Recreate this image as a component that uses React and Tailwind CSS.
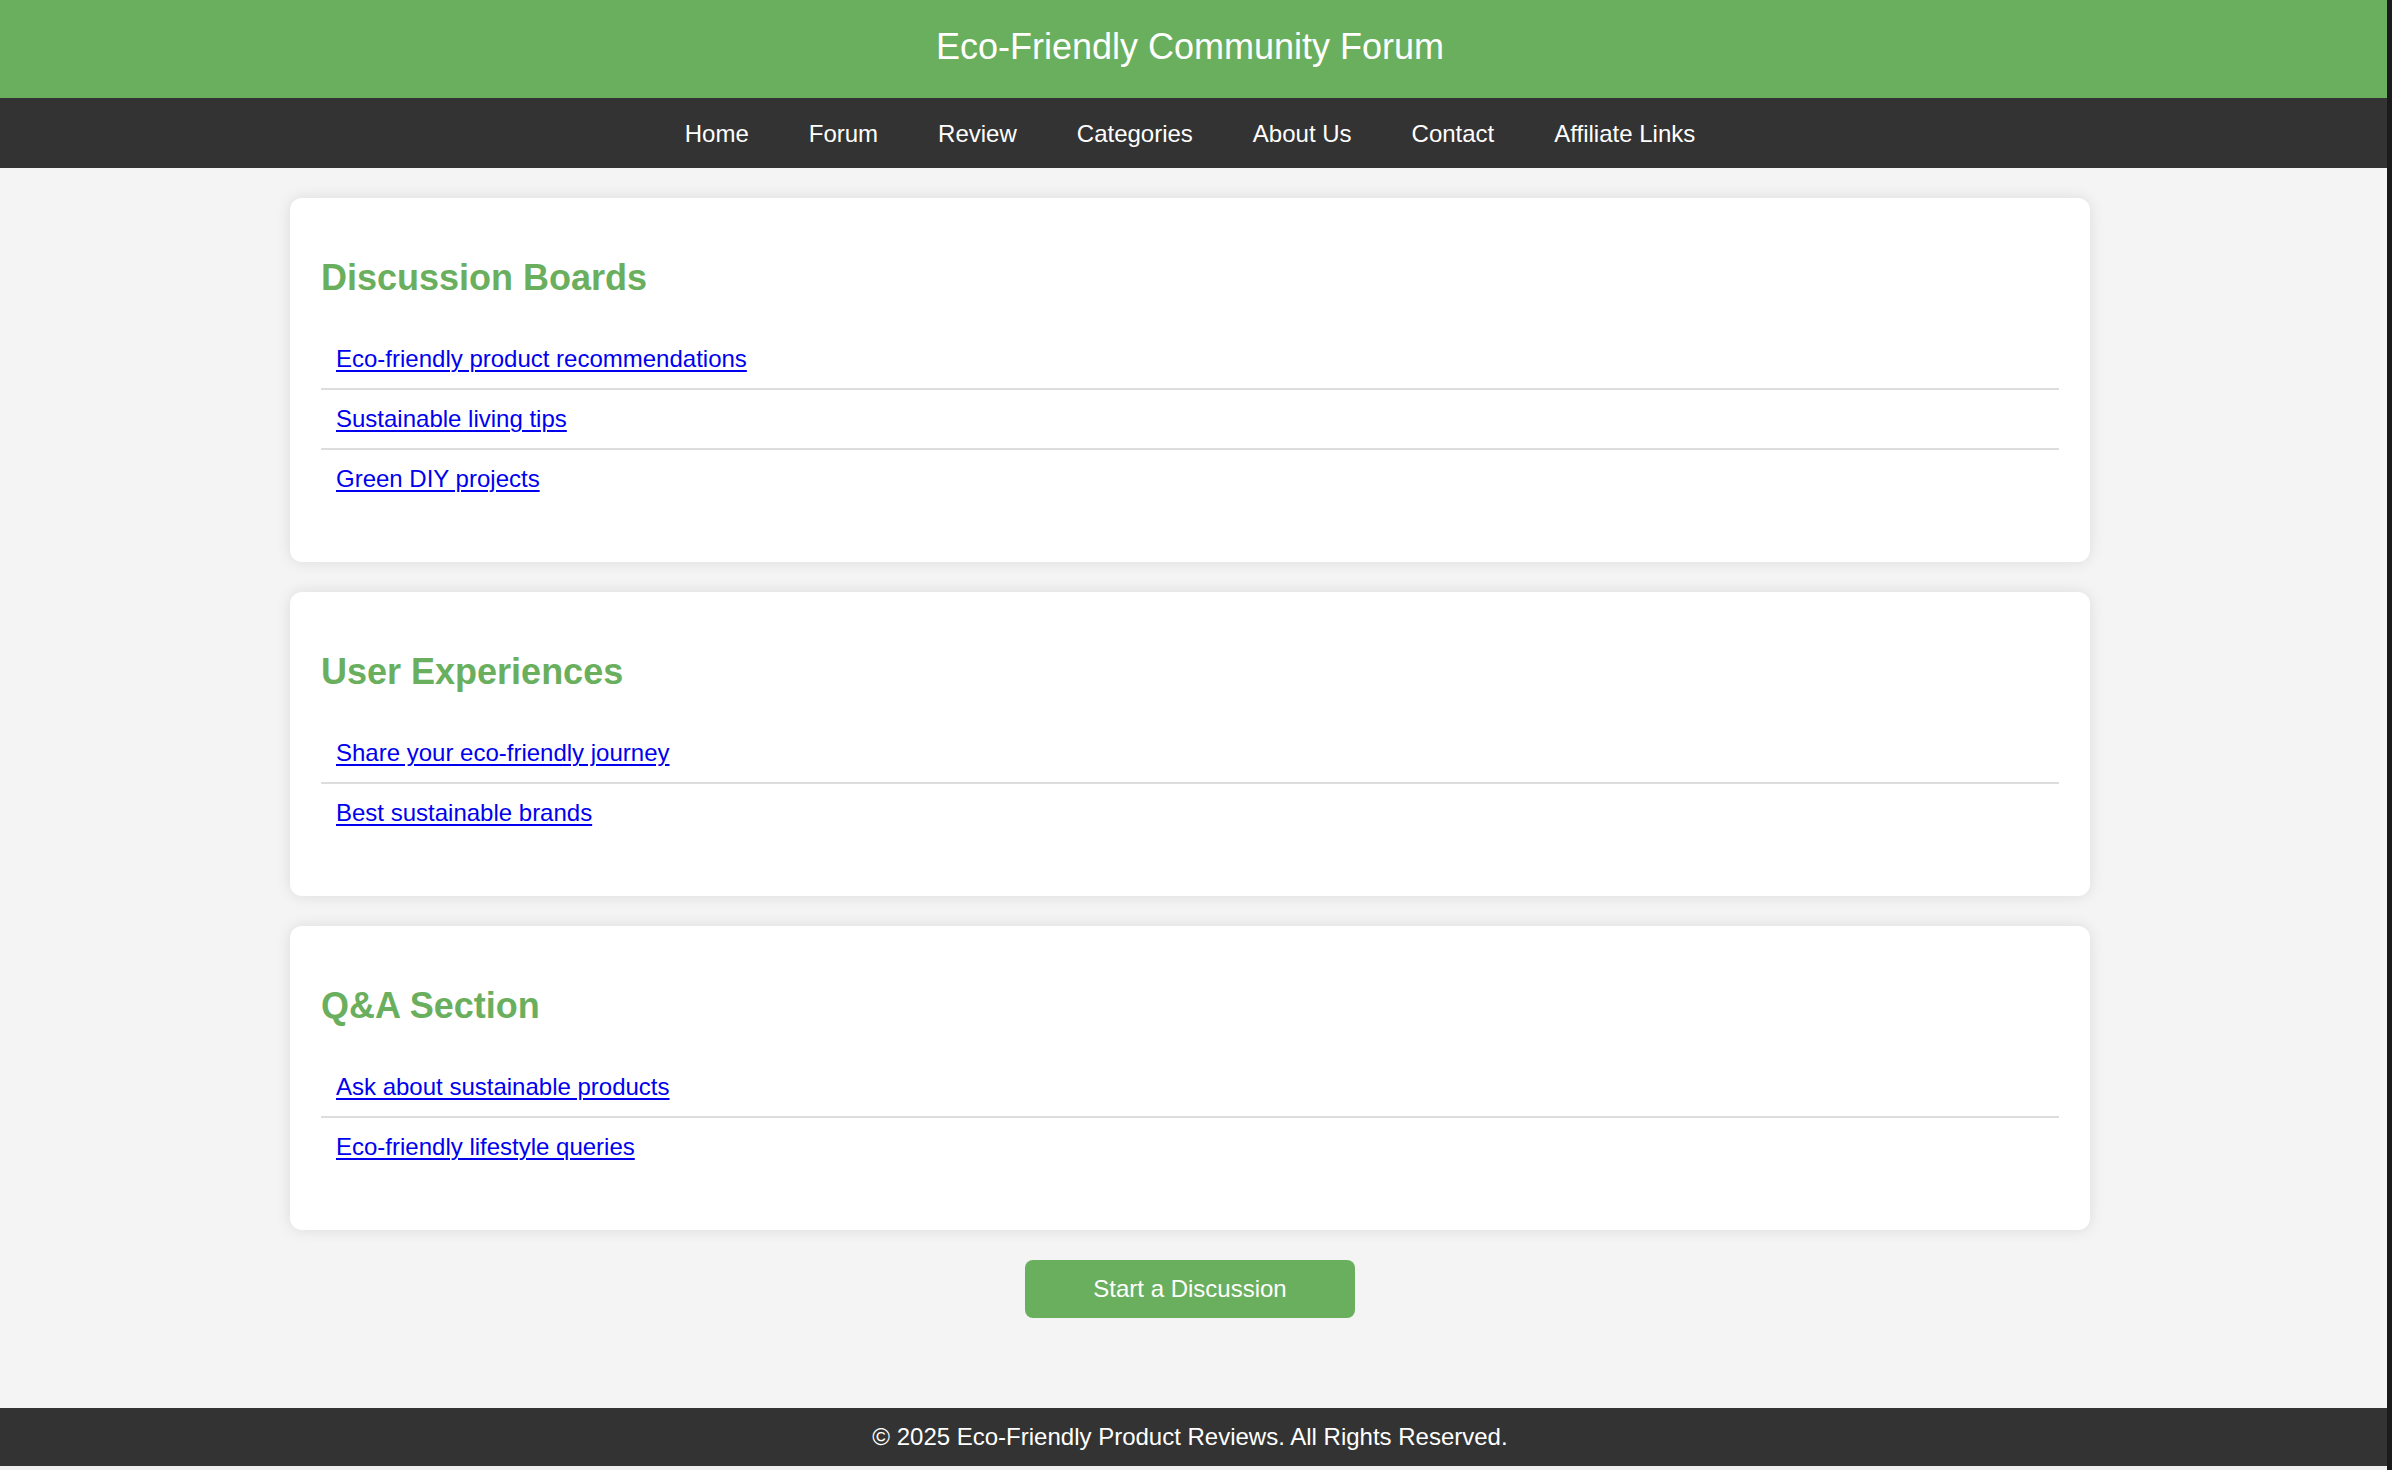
import React from "react";

const font = { fontFamily: '"Liberation Sans", Arial, sans-serif' };

const sections = [
  {
    title: "Discussion Boards",
    links: [
      "Eco-friendly product recommendations",
      "Sustainable living tips",
      "Green DIY projects",
    ],
  },
  {
    title: "User Experiences",
    links: ["Share your eco-friendly journey", "Best sustainable brands"],
  },
  {
    title: "Q&A Section",
    links: ["Ask about sustainable products", "Eco-friendly lifestyle queries"],
  },
];

const nav = ["Home", "Forum", "Review", "Categories", "About Us", "Contact", "Affiliate Links"];

function Card({ title, links }) {
  return (
    <section className="w-[1800px] bg-white rounded-[12px] shadow-[0_0_15px_rgba(0,0,0,0.1)] px-[31px] pt-[59px] pb-[54px]">
      <h2 className="text-[36px] leading-[41px] font-bold text-[#6aaf5e] mb-[32px]">{title}</h2>
      <ul>
        {links.map((l, i) => (
          <li
            key={l}
            className={
              "px-[15px] py-[15px] leading-[28px] text-[24px] " +
              (i < links.length - 1 ? "border-b-2 border-[#dddddd]" : "")
            }
          >
            <a href="#" className="text-[#0000ee] underline underline-offset-[3px] decoration-[2px]">
              {l}
            </a>
          </li>
        ))}
      </ul>
    </section>
  );
}

export default function App() {
  return (
    <div className="flex w-[2392px] min-h-[1470px] bg-[#1b1b1b]" style={font}>
      <div className="w-[2387px] bg-[#f4f4f4] flex flex-col">
        <header className="bg-[#6aaf5e] h-[98px]">
          <div className="w-[2380px] h-full flex justify-center pt-[26px]">
            <h1 className="text-white text-[36px] leading-[41px] font-normal">Eco-Friendly Community Forum</h1>
          </div>
        </header>
        <nav className="bg-[#333333] h-[70px]">
          <div className="w-[2380px] h-full flex justify-center items-center gap-[60px] pt-[1px]">
            {nav.map((n) => (
              <a key={n} href="#" className="text-white text-[24px] leading-[28px]">
                {n}
              </a>
            ))}
          </div>
        </nav>
        <main className="w-[2380px] flex flex-col items-center pt-[30px] gap-[30px]">
          {sections.map((s) => (
            <Card key={s.title} {...s} />
          ))}
          <button className="w-[330px] h-[58px] bg-[#6aaf5e] text-white text-[24px] rounded-[8px] flex items-center justify-center">
            Start a Discussion
          </button>
        </main>
        <div className="h-[90px]"></div>
        <footer className="bg-[#333333] h-[58px]">
          <div className="w-[2380px] h-full flex items-center justify-center text-white text-[24px]">
            © 2025 Eco-Friendly Product Reviews. All Rights Reserved.
          </div>
        </footer>
        <div className="flex-1 bg-[#f0f0f0]"></div>
      </div>
    </div>
  );
}
